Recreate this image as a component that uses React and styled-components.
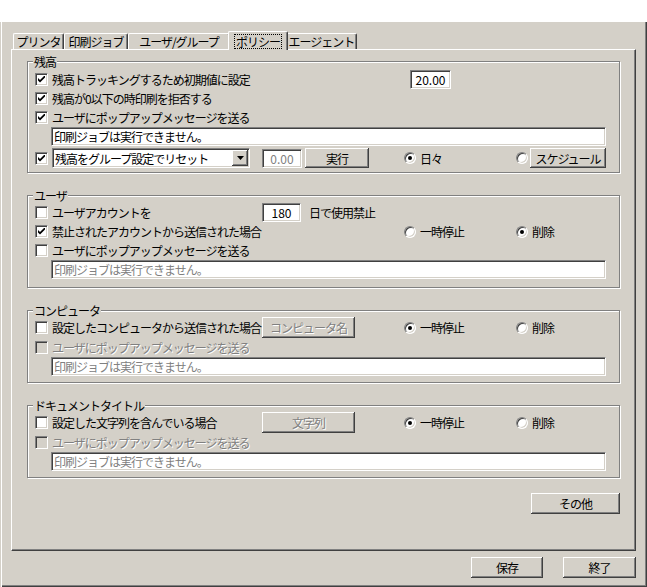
import React from 'react'
import styled, { createGlobalStyle, css } from 'styled-components'

const GlobalStyle = createGlobalStyle`
  html, body {
    margin: 0;
    background: #fff;
  }
  body {
    font-family: "Noto Sans CJK JP", "Noto Sans", sans-serif;
    font-size: 12px;
    letter-spacing: -1px;
  }
`

// classic win sunken / raised edges
const sunken = css`
  box-sizing: border-box;
  border: 1px solid;
  border-color: #808080 #fff #fff #808080;
  box-shadow: inset 1px 1px #404040, inset -1px -1px #d4d0c8;
`

const disabledText = css`
  color: #808080;
  text-shadow: 1px 1px #fff;
`

const Window = styled.div`
  margin-top: 22px;
  height: 565px;
  box-sizing: border-box;
  background: #d4d0c8;
  box-shadow: inset 1px 0 #d4d0c8, inset 2px 0 #fff, inset -1px -1px #404040, inset -2px -2px #808080;
  padding: 9px 11px 0 11px;
  display: flex;
  flex-direction: column;
`

const TabStrip = styled.div`
  height: 18px;
  display: flex;
  align-items: flex-end;
  padding-left: 2px;
`

const Tab = styled.div`
  position: relative;
  z-index: ${p => (p.$active ? 2 : 1)};
  width: ${p => p.$w}px;
  height: ${p => (p.$active ? 19 : 16)}px;
  margin: 0 ${p => (p.$active ? -2 : 0)}px ${p => (p.$active ? -1 : 0)}px;
  box-sizing: border-box;
  background: #d4d0c8;
  border-top: 1px solid #fff;
  border-left: 1px solid #fff;
  border-right: 1px solid #404040;
  box-shadow: inset -1px 0 #808080;
  border-radius: 2px 2px 0 0;
  display: flex;
  align-items: center;
  justify-content: center;
  line-height: 13px;
  white-space: nowrap;
`

const Focus = styled.span`
  outline: 1px dotted #000;
  outline-offset: 0;
  padding: 0 1px;
`

const Panel = styled.div`
  position: relative;
  width: 625px;
  height: 502px;
  box-sizing: border-box;
  border-top: 1px solid #fff;
  border-left: 1px solid #fff;
  border-right: 1px solid #404040;
  border-bottom: 1px solid #404040;
  box-shadow: inset -1px -1px #808080;
  padding: 11px 15px 0 15px;
  display: flex;
  flex-direction: column;
`

const Group = styled.div`
  position: relative;
  border: 1px solid #808080;
  box-shadow: inset 1px 1px #fff, 1px 1px #fff;
  padding: ${p => p.$pad};
  & + & {
    margin-top: 22px;
  }
`

const Legend = styled.span`
  position: absolute;
  top: -8px;
  left: 5px;
  padding: 0 1px;
  background: #d4d0c8;
  line-height: 15px;
`

const Row = styled.div`
  display: grid;
  grid-template-columns: 227px 142px 112px 1fr;
  align-items: center;
  height: ${p => p.$h || 19}px;
  margin-top: ${p => p.$mt || 0}px;
`

const Cell = styled.div`
  grid-column: ${p => p.$col};
  display: flex;
  align-items: center;
  gap: ${p => p.$gap || 0}px;
  white-space: nowrap;
`

const CheckLabel = styled.div`
  display: flex;
  align-items: center;
  gap: 4px;
  white-space: nowrap;
  ${p => p.$disabled && disabledText}
`

const Box = styled.span`
  ${sunken}
  width: 13px;
  height: 13px;
  flex-shrink: 0;
  background: ${p => (p.$disabled ? '#d4d0c8' : '#fff')};
  display: inline-flex;
  align-items: center;
  justify-content: center;
  text-shadow: none;
`

const RadioLabel = styled.div`
  display: flex;
  align-items: center;
  gap: 4px;
`

const RadioDot = styled.span`
  width: 12px;
  height: 12px;
  border-radius: 50%;
  box-sizing: border-box;
  border: 1px solid;
  border-color: #808080 #fff #fff #808080;
  box-shadow: inset 1px 1px #404040, inset -1px -1px #d4d0c8;
  background: #fff;
  display: inline-flex;
  align-items: center;
  justify-content: center;
  &::after {
    content: '';
    width: 4px;
    height: 4px;
    border-radius: 50%;
    background: #000;
    display: ${p => (p.$on ? 'block' : 'none')};
  }
`

const Field = styled.div`
  ${sunken}
  width: ${p => p.$w}px;
  height: ${p => p.$h || 19}px;
  margin-left: ${p => p.$ml || 0}px;
  background: #fff;
  display: flex;
  align-items: center;
  justify-content: ${p => (p.$center ? 'center' : 'flex-start')};
  padding-left: ${p => (p.$center ? 0 : 2)}px;
  white-space: nowrap;
  ${p => p.$center && 'letter-spacing: 0;'}
  ${p => p.$disabled && 'color: #808080;'}
`

const Message = styled(Field)`
  margin-left: 16px;
`

const Combo = styled.div`
  ${sunken}
  width: 198px;
  height: 20px;
  background: #fff;
  display: flex;
  align-items: center;
  padding-left: 2px;
  white-space: nowrap;
`

const DropButton = styled.span`
  width: 16px;
  height: 16px;
  margin-left: auto;
  margin-right: 1px;
  background: #d4d0c8;
  box-shadow: inset -1px -1px #404040, inset 1px 1px #fff, inset -2px -2px #808080;
  display: flex;
  align-items: center;
  justify-content: center;
`

const Button = styled.button`
  width: ${p => p.$w}px;
  height: ${p => p.$h || 21}px;
  margin-left: ${p => p.$ml || 0}px;
  padding: 0;
  border: none;
  background: #d4d0c8;
  font: inherit;
  letter-spacing: inherit;
  color: #000;
  box-shadow: inset -1px -1px #404040, inset 1px 1px #fff, inset -2px -2px #808080;
  white-space: nowrap;
  ${p => p.$disabled && disabledText}
`

const MoreRow = styled.div`
  display: flex;
  justify-content: flex-end;
  margin-top: 15px;
`

const Footer = styled.div`
  display: flex;
  justify-content: flex-end;
  gap: 20px;
  margin-top: 6px;
`

function CheckMark() {
  return (
    <svg width="7" height="7" viewBox="0 0 7 7">
      <polygon points="0,2 2,4 7,-1 7,1.6 2,6.6 0,4.6" fill="#000" />
    </svg>
  )
}

function Check({ on, disabled, children }) {
  return (
    <CheckLabel $disabled={disabled}>
      <Box $disabled={disabled}>{on && <CheckMark />}</Box>
      {children}
    </CheckLabel>
  )
}

function Radio({ on, children }) {
  return (
    <RadioLabel>
      <RadioDot $on={on} />
      {children}
    </RadioLabel>
  )
}

const tabs = [
  { label: 'プリンタ', w: 51 },
  { label: '印刷ジョブ', w: 64 },
  { label: 'ユーザ/グループ', w: 102 },
  { label: 'ポリシー', w: 60, active: true },
  { label: 'エージェント', w: 71 },
]

const MSG = '印刷ジョブは実行できません。'

export default function App() {
  return (
    <>
      <GlobalStyle />
      <Window>
        <TabStrip>
          {tabs.map(t => (
            <Tab key={t.label} $w={t.w} $active={t.active}>
              {t.active ? <Focus>{t.label}</Focus> : t.label}
            </Tab>
          ))}
        </TabStrip>

        <Panel>
          <Group $pad="8px 7px 4px">
            <Legend>残高</Legend>
            <Row>
              <Cell $col="1 / 3"><Check on>残高トラッキングするため初期値に設定</Check></Cell>
              <Cell $col="3"><Field $w={41} $ml={6} $center>20.00</Field></Cell>
            </Row>
            <Row>
              <Cell $col="1 / 3"><Check on>残高が0以下の時印刷を拒否する</Check></Cell>
            </Row>
            <Row>
              <Cell $col="1 / 3"><Check on>ユーザにポップアップメッセージを送る</Check></Cell>
            </Row>
            <Message $w={555}>{MSG}</Message>
            <Row $h={20} $mt={2}>
              <Cell $col="1" $gap={4}>
                <Box><CheckMark /></Box>
                <Combo>
                  残高をグループ設定でリセット
                  <DropButton>
                    <svg width="7" height="4" viewBox="0 0 7 4">
                      <polygon points="0,0 7,0 3.5,4" fill="#000" />
                    </svg>
                  </DropButton>
                </Combo>
              </Cell>
              <Cell $col="2" $gap={3}>
                <Field $w={40} $h={19} $center $disabled>0.00</Field>
                <Button $w={64} $h={20}>実行</Button>
              </Cell>
              <Cell $col="3"><Radio on>日々</Radio></Cell>
              <Cell $col="4" $gap={2}>
                <RadioDot />
                <Button $w={76} $h={20}>スケジュール</Button>
              </Cell>
            </Row>
          </Group>

          <Group $pad="6px 7px 8px">
            <Legend>ユーザ</Legend>
            <Row $h={20}>
              <Cell $col="1"><Check>ユーザアカウントを</Check></Cell>
              <Cell $col="2 / 4" $gap={8}>
                <Field $w={39} $center>180</Field>
                日で使用禁止
              </Cell>
            </Row>
            <Row>
              <Cell $col="1 / 3"><Check on>禁止されたアカウントから送信された場合</Check></Cell>
              <Cell $col="3"><Radio>一時停止</Radio></Cell>
              <Cell $col="4"><Radio on>削除</Radio></Cell>
            </Row>
            <Row>
              <Cell $col="1 / 3"><Check>ユーザにポップアップメッセージを送る</Check></Cell>
            </Row>
            <Message $w={555} $disabled>{MSG}</Message>
          </Group>

          <Group $pad="6px 7px 6px">
            <Legend>コンピュータ</Legend>
            <Row $h={21}>
              <Cell $col="1"><Check>設定したコンピュータから送信された場合</Check></Cell>
              <Cell $col="2"><Button $w={93} $disabled>コンピュータ名</Button></Cell>
              <Cell $col="3"><Radio on>一時停止</Radio></Cell>
              <Cell $col="4"><Radio>削除</Radio></Cell>
            </Row>
            <Row>
              <Cell $col="1 / 3"><Check disabled>ユーザにポップアップメッセージを送る</Check></Cell>
            </Row>
            <Message $w={555} $disabled>{MSG}</Message>
          </Group>

          <Group $pad="6px 7px 6px">
            <Legend>ドキュメントタイトル</Legend>
            <Row $h={21}>
              <Cell $col="1"><Check>設定した文字列を含んでいる場合</Check></Cell>
              <Cell $col="2"><Button $w={93} $disabled>文字列</Button></Cell>
              <Cell $col="3"><Radio on>一時停止</Radio></Cell>
              <Cell $col="4"><Radio>削除</Radio></Cell>
            </Row>
            <Row>
              <Cell $col="1 / 3"><Check disabled>ユーザにポップアップメッセージを送る</Check></Cell>
            </Row>
            <Message $w={555} $disabled>{MSG}</Message>
          </Group>

          <MoreRow>
            <Button $w={89}>その他</Button>
          </MoreRow>
        </Panel>

        <Footer>
          <Button $w={72}>保存</Button>
          <Button $w={73}>終了</Button>
        </Footer>
      </Window>
    </>
  )
}
